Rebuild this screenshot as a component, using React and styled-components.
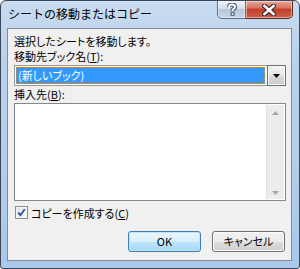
import styled, { createGlobalStyle } from "styled-components"

const Global = createGlobalStyle`
html, body {
  margin: 0;
  padding: 0;
  background: #fff;
}
body {
  font-family: "Noto Sans CJK JP", "Noto Sans", sans-serif;
}
`

const Window = styled.div`
width: 300px;
height: 269px;
box-sizing: border-box;
border: 1px solid #3b4756;
border-radius: 6px 6px 3px 3px;
background: linear-gradient(to bottom, #c9dcf0 0%, #bad2ec 20%, #b4cdea 60%, #a9c8ec 100%);
display: flex;
flex-direction: column;
padding: 0 7px 7px 6px;
overflow: hidden;
`

const TitleBar = styled.div`
height: 27px;
display: flex;
justify-content: space-between;
align-items: flex-start;
flex-shrink: 0;
`

const Title = styled.div`
margin: 5px 0 0 1px;
font-size: 12px;
line-height: 16px;
color: #000;
`

const Controls = styled.div`
display: flex;
margin: -1px -1px 0 0;
`

const CaptionButton = styled.div`
height: 19px;
box-sizing: border-box;
width: ${p => p.$wide ? '47px' : '29px'};
border: 1px solid ${p => p.$close ? '#5b2b22' : '#5e6e80'};
border-left-width: ${p => p.$close ? '0' : '1px'};
border-radius: ${p => p.$close ? '0 0 5px 0' : '0 0 0 5px'};
background: ${p => p.$close
  ? 'linear-gradient(to bottom, #e8ab9c 0%, #d5735e 40%, #c2402b 50%, #cf5f48 100%)'
  : 'linear-gradient(to bottom, #edf2f8 0%, #d2deea 45%, #b6c7da 50%, #c9d7e6 100%)'};
box-shadow: inset 0 0 0 1px rgba(255,255,255,0.45);
display: flex;
align-items: center;
justify-content: center;
`

const Client = styled.div`
flex: 1;
border: 1px solid #7d8b9c;
background: #f0f0f0;
padding: 4px 5px 0 6px;
display: flex;
flex-direction: column;
font-size: 11px;
font-feature-settings: "palt";
color: #000;
`

const Label = styled.div`
line-height: ${p => p.$lh || 15}px;
height: ${p => p.$lh || 15}px;
white-space: nowrap;
`

const Key = styled.span`
text-decoration: underline;
`

const Combo = styled.div`
margin-top: 1px;
height: 21px;
box-sizing: border-box;
border: 1px solid #9a9a9a;
background: #fff;
display: flex;
`

const Selected = styled.div`
flex: 1;
margin: 1px 2px 1px 1px;
background: #3399ff;
border: 1px dotted #e08a1e;
color: #fff;
line-height: 15px;
padding-left: 1px;
`

const DropButton = styled.div`
width: 19px;
margin: -1px -1px -1px 0;
box-sizing: border-box;
border: 1px solid #6f6f6f;
background: linear-gradient(to bottom, #f4f4f4 0%, #e6e6e6 50%, #d8d8d8 51%, #cdcdcd 100%);
box-shadow: inset 0 0 0 1px #fafafa;
display: flex;
align-items: center;
justify-content: center;
`

const ListBox = styled.div`
height: 98px;
box-sizing: border-box;
border: 1px solid #828790;
background: #fff;
display: flex;
justify-content: flex-end;
padding: 1px;
`

const ScrollBar = styled.div`
width: 17px;
background: #ececec;
border-left: 1px solid #e2e2e2;
display: flex;
flex-direction: column;
justify-content: space-between;
align-items: center;
padding: 6px 0 4px;
`

const CheckRow = styled.div`
margin-top: 4px;
height: 15px;
display: flex;
align-items: center;
gap: 3px;
padding-left: 1px;
`

const CheckBox = styled.span`
width: 13px;
height: 13px;
box-sizing: border-box;
border: 1px solid #8f8f8f;
background: linear-gradient(135deg, #dcdcdc 0%, #f4f4f4 60%, #fff 100%);
box-shadow: inset 0 0 0 1px #f4f4f4;
display: flex;
align-items: center;
justify-content: center;
`

const ButtonRow = styled.div`
margin-top: 11px;
display: flex;
justify-content: flex-end;
gap: 11px;
padding-right: 1px;
`

const Button = styled.div`
width: 73px;
height: 21px;
box-sizing: border-box;
border: 1px solid ${p => p.$default ? '#3c7fb1' : '#707070'};
border-radius: 3px;
background: ${p => p.$default
  ? 'linear-gradient(to bottom, #eaf6fd 0%, #d9f0fc 50%, #bee6fd 51%, #a7d9f5 100%)'
  : 'linear-gradient(to bottom, #f2f2f2 0%, #ebebeb 50%, #dddddd 51%, #cfcfcf 100%)'};
box-shadow: inset 0 0 0 1px ${p => p.$default ? '#bfe4f8' : '#fbfbfb'};
display: flex;
align-items: center;
justify-content: center;
line-height: 19px;
`

function Help() {
  return (
    <svg width="12" height="13" viewBox="0 0 12 13">
      <path d="M3 4 Q3 1.5 6 1.5 Q9 1.5 9 4 Q9 5.6 6.6 6.6 L6.6 8.2" fill="none" stroke="#3b4a5c" strokeWidth="4" strokeLinejoin="round" />
      <path d="M3 4 Q3 1.5 6 1.5 Q9 1.5 9 4 Q9 5.6 6.6 6.6 L6.6 8.2" fill="none" stroke="#fff" strokeWidth="2" />
      <rect x="4.6" y="9.3" width="4" height="3.4" fill="#3b4a5c" />
      <rect x="5.6" y="10.2" width="2" height="1.6" fill="#fff" />
    </svg>
  )
}

function CloseX() {
  return (
    <svg width="14" height="12" viewBox="0 0 14 12">
      <path d="M2.5 2 L11.5 10 M11.5 2 L2.5 10" stroke="#3a2a28" strokeWidth="5" strokeLinecap="square" />
      <path d="M2.5 2 L11.5 10 M11.5 2 L2.5 10" stroke="#fff" strokeWidth="2.6" strokeLinecap="square" />
    </svg>
  )
}

function Tri({ up, color = '#000', w = 7 }) {
  const h = Math.ceil(w / 2)
  return (
    <svg width={w} height={h} viewBox={`0 0 ${w} ${h}`}>
      <polygon points={up ? `0,${h} ${w},${h} ${w / 2},0` : `0,0 ${w},0 ${w / 2},${h}`} fill={color} />
    </svg>
  )
}

function CheckMark() {
  return (
    <svg width="9" height="9" viewBox="0 0 9 9">
      <path d="M1.2 4.6 L3.4 7.2 L7.8 1.2" fill="none" stroke="#2a53a8" strokeWidth="1.8" />
    </svg>
  )
}

export default function App() {
  return (
    <>
      <Global />
      <Window>
        <TitleBar>
          <Title>シートの移動またはコピー</Title>
          <Controls>
            <CaptionButton><Help /></CaptionButton>
            <CaptionButton $close $wide><CloseX /></CaptionButton>
          </Controls>
        </TitleBar>

        <Client>
          <Label $lh={16}>選択したシートを移動します。</Label>
          <Label>移動先ブック名(<Key>T</Key>):</Label>
          <Combo>
            <Selected>(新しいブック)</Selected>
            <DropButton><Tri w={7} /></DropButton>
          </Combo>
          <Label $lh={17}>挿入先(<Key>B</Key>):</Label>
          <ListBox>
            <ScrollBar>
              <Tri up color="#a8a8a8" />
              <Tri color="#a8a8a8" />
            </ScrollBar>
          </ListBox>
          <CheckRow>
            <CheckBox><CheckMark /></CheckBox>
            <span>コピーを作成する(<Key>C</Key>)</span>
          </CheckRow>
          <ButtonRow>
            <Button $default>OK</Button>
            <Button>キャンセル</Button>
          </ButtonRow>
        </Client>
      </Window>
    </>
  )
}
